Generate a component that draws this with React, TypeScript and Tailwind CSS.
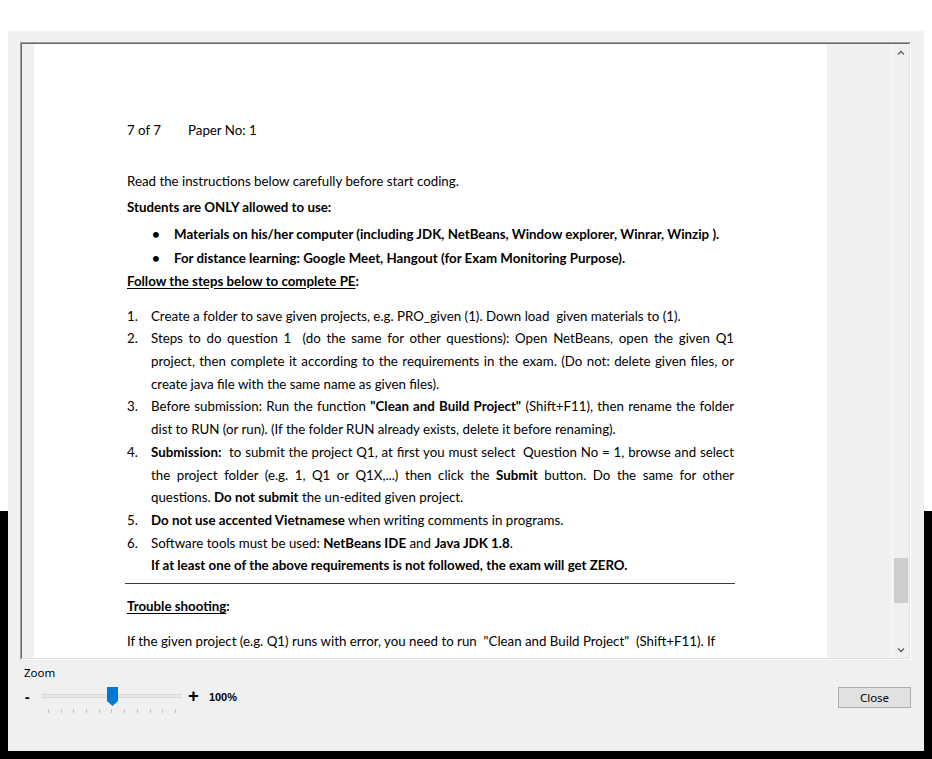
const line = "h-[22.73px] leading-[22.73px] whitespace-nowrap";
const just = "h-[22.73px] leading-[22.73px] text-justify [text-align-last:justify]";

function Num({ n, children }: { n: string; children: React.ReactNode }) {
  return (
    <div className="flex">
      <div className="w-[24px] h-[22.73px] leading-[22.73px] shrink-0">{n}</div>
      <div className="flex-1 flex flex-col">{children}</div>
    </div>
  );
}

function Page() {
  return (
    <div className="w-[793px] h-full bg-white overflow-hidden shrink-0 font-['Lato',sans-serif] text-[13.3px] text-black">
      <div className="pl-[93px] pt-[74.5px] w-[700px]">
        <div className="flex h-[23px] leading-[23px]">
          <span className="w-[61px]">7 of 7</span>
          <span>Paper No: 1</span>
        </div>
        <div className="mt-[28px] h-[23px] leading-[23px]">
          Read the instructions below carefully before start coding.
        </div>
        <div className="mt-[3px] h-[23px] leading-[23px] font-bold">Students are ONLY allowed to use:</div>
        <div className="mt-[4px] h-[23px] leading-[23px] font-bold flex">
          <span className="w-[47px] pl-[25px]">•</span>
          <span>Materials on his/her computer (including JDK, NetBeans, Window explorer, Winrar, Winzip ).</span>
        </div>
        <div className="mt-[1px] h-[23px] leading-[23px] font-bold flex">
          <span className="w-[47px] pl-[25px]">•</span>
          <span>For distance learning: Google Meet, Hangout (for Exam Monitoring Purpose).</span>
        </div>
        <div className="h-[23px] leading-[23px] font-bold">
          <span className="underline underline-offset-2">Follow the steps below to complete PE</span>:
        </div>

        <div className="mt-[12px] w-[607px]">
          <Num n="1.">
            <div className={line}>Create a folder to save given projects, e.g. PRO_given (1). Down load&nbsp; given materials to (1).</div>
          </Num>
          <Num n="2.">
            <div className={just}>Steps to do question 1&nbsp; (do the same for other questions): Open NetBeans, open the given Q1</div>
            <div className={just}>project, then complete it according to the requirements in the exam. (Do not: delete given files, or</div>
            <div className={line}>create java file with the same name as given files).</div>
          </Num>
          <Num n="3.">
            <div className={just}>
              Before submission: Run the function <b>"Clean and Build Project"</b> (Shift+F11), then rename the folder
            </div>
            <div className={line}>dist to RUN (or run). (If the folder RUN already exists, delete it before renaming).</div>
          </Num>
          <Num n="4.">
            <div className={just}>
              <b>Submission:</b>&nbsp; to submit the project Q1, at first you must select&nbsp; Question No = 1, browse and select
            </div>
            <div className={just}>
              the project folder (e.g. 1, Q1 or Q1X,...) then click the <b>Submit</b> button. Do the same for other
            </div>
            <div className={line}>
              questions. <b>Do not submit</b> the un-edited given project.
            </div>
          </Num>
          <Num n="5.">
            <div className={line}>
              <b>Do not use accented Vietnamese</b> when writing comments in programs.
            </div>
          </Num>
          <Num n="6.">
            <div className={line}>
              Software tools must be used: <b>NetBeans IDE</b> and <b>Java JDK 1.8</b>.
            </div>
            <div className={line + " font-bold"}>
              If at least one of the above requirements is not followed, the exam will get ZERO.
            </div>
          </Num>
        </div>

        <div className="mt-[5.5px] ml-[-2px] w-[610px] h-px bg-[#3c3c3c]" />

        <div className="mt-[11.5px] h-[23px] leading-[23px] font-bold">
          <span className="underline underline-offset-2">Trouble shooting</span>:
        </div>
        <div className="mt-[12px] h-[23px] leading-[23px] whitespace-nowrap">
          If the given project (e.g. Q1) runs with error, you need to run&nbsp; "Clean and Build Project"&nbsp; (Shift+F11). If
        </div>
      </div>
    </div>
  );
}

function Scrollbar() {
  return (
    <div className="w-[17px] h-full flex flex-col border-l border-l-[#fafafa] shrink-0">
      <div className="h-[17px] flex items-center justify-center">
        <svg width="8" height="6" viewBox="0 0 8 6">
          <path d="M1 4.5 L4 1.5 L7 4.5" fill="none" stroke="#606060" strokeWidth="1.4" />
        </svg>
      </div>
      <div className="flex-1 px-px">
        <div className="mt-[497px] h-[45px] bg-[#cdcdcd]" />
      </div>
      <div className="h-[17px] flex items-center justify-center">
        <svg width="8" height="6" viewBox="0 0 8 6">
          <path d="M1 1.5 L4 4.5 L7 1.5" fill="none" stroke="#606060" strokeWidth="1.4" />
        </svg>
      </div>
    </div>
  );
}

function Viewer() {
  return (
    <div className="mt-[11px] ml-[12px] mr-[13px] h-[618px] border border-t-[#a0a0a0] border-l-[#a0a0a0] border-r-white border-b-white">
      <div className="h-full border border-t-[#696969] border-l-[#696969] border-r-[#e3e3e3] border-b-[#e3e3e3] flex overflow-hidden bg-[#f0f0f0]">
        <div className="w-[12px] shrink-0" />
        <Page />
        <div className="flex-1" />
        <Scrollbar />
      </div>
    </div>
  );
}

function Slider() {
  return (
    <div className="relative w-[139px] h-[28px]">
      <div className="absolute left-0 right-0 top-[7px] h-[4px] bg-[#e7eaea] border border-[#d6d6d6]" />
      <svg className="absolute left-[65px] top-0" width="11" height="19" viewBox="0 0 11 19">
        <path d="M0 0 H11 V14 L5.5 19 L0 14 Z" fill="#0078d7" />
      </svg>
      <div className="absolute left-[6px] w-[128px] top-[22px] flex justify-between">
        {[0, 1, 2, 3, 4, 5, 6, 7, 8, 9, 10].map((i) => (
          <div key={i} className="w-px h-[4px] bg-[#c4c4c4]" />
        ))}
      </div>
    </div>
  );
}

function Footer() {
  return (
    <div className="flex-1 flex justify-between font-['Noto_Sans',sans-serif] text-black">
      <div className="pl-[16px] pt-[5px]">
        <div className="text-[11.5px] leading-[16px]">Zoom</div>
        <div className="mt-[6px] flex items-start h-[28px]">
          <span className="w-[18px] pl-[1px] font-bold text-[14px] leading-[20px]">-</span>
          <Slider />
          <span className="ml-[7px] font-bold text-[19px] leading-[19px]">+</span>
          <span className="ml-[10px] font-['Liberation_Sans',sans-serif] font-bold text-[11px] leading-[20px]">100%</span>
        </div>
      </div>
      <div className="pt-[24px] pr-[13px]">
        <button className="w-[73px] h-[21px] bg-[#e1e1e1] border border-[#adadad] text-[11.5px] leading-[19px] text-black">
          Close
        </button>
      </div>
    </div>
  );
}

export default function App() {
  return (
    <div className="w-[932px] h-[759px] bg-[linear-gradient(to_bottom,#ffffff_511px,#000000_511px)] pt-[31px] px-[8px] pb-[8px]">
      <div className="w-[916px] h-[720px] bg-[#f0f0f0] flex flex-col">
        <Viewer />
        <Footer />
      </div>
    </div>
  );
}
